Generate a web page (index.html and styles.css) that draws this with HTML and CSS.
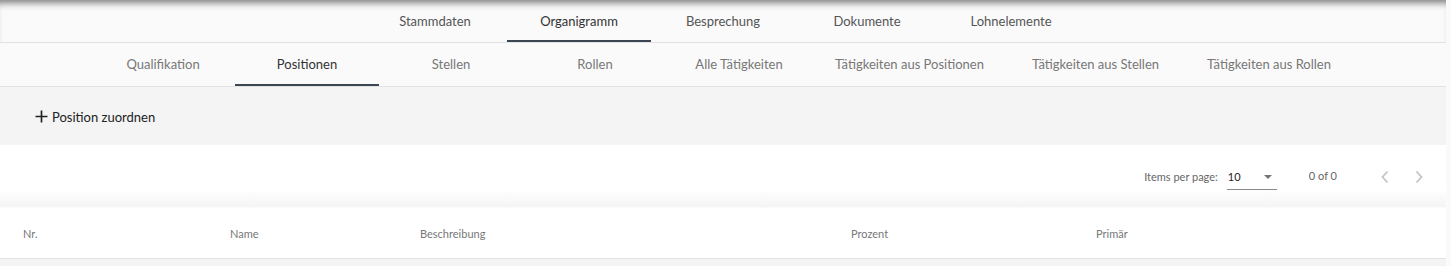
FILE: index.html
```html
<!DOCTYPE html>
<html lang="de">
<head>
<meta charset="utf-8">
<title>Organigramm – Positionen</title>
<link rel="stylesheet" href="styles.css">
</head>
<body>
<div class="pane">
  <nav class="tabs tabs-main">
    <div class="tab">Stammdaten</div>
    <div class="tab active">Organigramm</div>
    <div class="tab">Besprechung</div>
    <div class="tab">Dokumente</div>
    <div class="tab">Lohnelemente</div>
  </nav>
  <nav class="tabs tabs-sub">
    <div class="tab">Qualifikation</div>
    <div class="tab active">Positionen</div>
    <div class="tab">Stellen</div>
    <div class="tab">Rollen</div>
    <div class="tab">Alle Tätigkeiten</div>
    <div class="tab">Tätigkeiten aus Positionen</div>
    <div class="tab">Tätigkeiten aus Stellen</div>
    <div class="tab">Tätigkeiten aus Rollen</div>
  </nav>
  <div class="toolbar">
    <button class="add-btn">
      <svg class="plus" width="13" height="13" viewBox="0 0 13 13"><path d="M6.5 0.5v12M0.5 6.5h12" stroke="#222" stroke-width="1.7" fill="none"/></svg>
      <span>Position zuordnen</span>
    </button>
  </div>
  <div class="paginator">
    <span class="pg-label">Items per page:</span>
    <div class="pg-select">
      <span class="pg-value">10</span>
      <svg class="caret" width="8" height="4" viewBox="0 0 8 4"><path d="M0 0h8L4 4z" fill="#757575"/></svg>
    </div>
    <span class="pg-range">0 of 0</span>
    <div class="pg-nav">
      <svg width="10" height="14" viewBox="0 0 10 14"><path d="M7.5 1.5L2.5 7l5 5.5" stroke="#c4c4c4" stroke-width="1.8" fill="none"/></svg>
      <svg width="10" height="14" viewBox="0 0 10 14"><path d="M2.5 1.5L7.5 7l-5 5.5" stroke="#c4c4c4" stroke-width="1.8" fill="none"/></svg>
    </div>
  </div>
  <div class="table-head">
    <div>Nr.</div>
    <div>Name</div>
    <div>Beschreibung</div>
    <div>Prozent</div>
    <div>Primär</div>
  </div>
  <div class="rest"></div>
</div>
</body>
</html>
```
FILE: styles.css
```css
html, body {
  margin: 0;
  padding: 0;
  background: #fafafa;
  font-family: "Lato", "Open Sans", sans-serif;
  height: 266px;
  overflow: hidden;
}
.pane {
  width: 1446px;
  display: flex;
  flex-direction: column;
}
.tabs {
  display: flex;
  justify-content: center;
  background: #fafafa;
  border-bottom: 1px solid #e2e2e2;
}
.tabs-main {
  height: 42px;
  box-shadow: inset 0 8px 7px -5px rgba(0, 0, 0, 0.5);
}
.tabs-sub {
  height: 43px;
}
.tab {
  box-sizing: border-box;
  min-width: 144px;
  padding: 0 24px;
  display: flex;
  align-items: center;
  justify-content: center;
  font-size: 13px;
  color: #666;
  border-bottom: 2px solid transparent;
  white-space: nowrap;
}
.tabs-main .tab {
  color: #555;
  padding-top: 1px;
}
.tabs-sub .tab {
  color: #777;
}
.tab.active {
  color: #333;
  border-bottom-color: #3c4552;
}
.toolbar {
  height: 58px;
  background: #f4f4f4;
  display: flex;
  align-items: center;
  padding-left: 35px;
}
.add-btn {
  display: flex;
  align-items: center;
  gap: 4px;
  background: none;
  border: 0;
  padding: 0;
  font-family: inherit;
  font-size: 13px;
  color: #222;
  margin-top: 1px;
}
.paginator {
  height: 62px;
  background: linear-gradient(#fff 0, #fff 72%, #f4f4f4 100%);
  display: flex;
  align-items: center;
  justify-content: flex-end;
  font-size: 11px;
  color: #666;
  padding-right: 22px;
  margin-bottom: 1px;
}
.pg-label {
  margin-right: 9px;
}
.pg-select {
  width: 50px;
  height: 26px;
  box-sizing: border-box;
  border-bottom: 1px solid #8a8a8a;
  display: flex;
  align-items: center;
  justify-content: space-between;
  padding: 0 5px 0 1px;
  margin-top: 2px;
  margin-right: 32px;
}
.pg-value {
  color: #222;
  font-size: 11px;
}
.caret {
  margin-left: 20px;
}
.pg-range {
  margin-right: 43px;
  margin-top: -2px;
}
.pg-nav {
  display: flex;
  gap: 24px;
  margin-top: 2px;
}
.table-head {
  height: 50px;
  background: #fff;
  border-bottom: 1px solid #e2e2e2;
  display: grid;
  grid-template-columns: 207px 190px 431px 245px 1fr;
  align-items: center;
  padding-left: 23px;
  font-size: 11px;
  color: #777;
}
.rest {
  height: 20px;
  background: #f4f4f4;
}
```
